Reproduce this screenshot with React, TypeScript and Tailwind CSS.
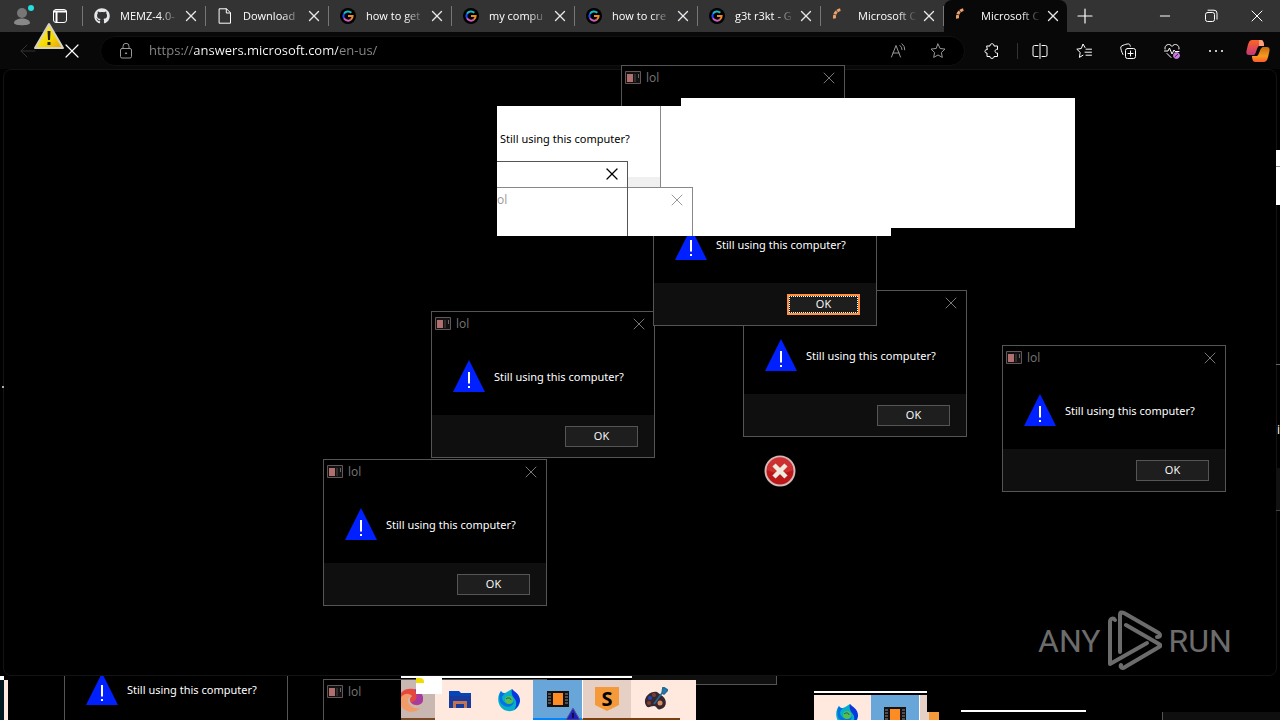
import clsx from "clsx";
import { Minus, Plus, X } from "lucide-react";
import { type ReactNode } from "react";
import { FaGithub } from "react-icons/fa";

type TabIcon = "github" | "file" | "google" | "loading";

const tabs: { icon: TabIcon; title: string }[] = [
  { icon: "github", title: "MEMZ-4.0-" },
  { icon: "file", title: "Download" },
  { icon: "google", title: "how to get" },
  { icon: "google", title: "my compu" },
  { icon: "google", title: "how to cre" },
  { icon: "google", title: "g3t r3kt - G" },
  { icon: "loading", title: "Microsoft C" },
  { icon: "loading", title: "Microsoft C" },
];

function Icon({ children, className }: { children: ReactNode; className?: string }) {
  return (
    <svg
      viewBox="0 0 16 16"
      fill="none"
      stroke="currentColor"
      strokeLinecap="round"
      strokeLinejoin="round"
      aria-hidden="true"
      className={clsx("size-4 shrink-0", className)}
    >
      {children}
    </svg>
  );
}

function Favicon({ icon }: { icon: TabIcon }) {
  if (icon === "github") {
    return <FaGithub className="size-4 shrink-0 text-gray-200" />;
  }
  if (icon === "file") {
    return (
      <Icon className="text-white">
        <path d="M2.500.8h7l4 4v10.400h-11zM9.300.8v4.200h4.200" />
      </Icon>
    );
  }
  if (icon === "google") {
    return (
      <svg viewBox="0 0 16 16" fill="none" strokeWidth="2" className="size-4 shrink-0" aria-hidden="true">
        <circle cx="8" cy="8" r="8" fill="#000" />
        <path d="M4 5.700A4.600 4.600 0 0 1 11.300 4.800" stroke="#14bccb" />
        <path d="M4 5.700A4.600 4.600 0 0 0 4 10.300" stroke="#2448f8" />
        <path d="M4 10.300A4.600 4.600 0 0 0 11 11.500" stroke="#d45fc0" />
        <path d="M11 11.500A4.600 4.600 0 0 0 12.600 8H8" stroke="#f08a20" />
      </svg>
    );
  }
  return (
    <Icon className="text-[#eda06a]">
      <path d="M2.500 10.500C2 5.500 4.500 2.300 9 1.500" strokeWidth="3" strokeDasharray="3.500 .6" strokeLinecap="butt" />
    </Icon>
  );
}

function Tab({ icon, title, active }: { icon: TabIcon; title: string; active: boolean }) {
  return (
    <div
      className={clsx(
        "flex w-[123px] shrink items-center pl-[11px] pr-[5px]",
        active ? "h-8 rounded-t-lg bg-[#080808]" : "h-5 border-r border-[#777]",
      )}
    >
      <Favicon icon={icon} />
      <button className="ml-2.5 min-w-0 flex-1 overflow-hidden whitespace-nowrap text-left text-[11px] text-white [mask-image:linear-gradient(90deg,#000_65%,transparent_98%)]">
        {title}
      </button>
      <button aria-label="Close tab" className="ml-0.5 text-gray-200">
        <X className="size-[18px]" strokeWidth={1.800} />
      </button>
    </div>
  );
}

function TabStrip() {
  return (
    <div className="flex h-8 items-center bg-[#333]">
      <div className="flex h-5 w-[83px] shrink-0 items-center border-r border-[#777] pl-3">
        <button aria-label="Profile">
          <svg viewBox="0 0 24 24" className="size-6" aria-hidden="true">
            <circle cx="10" cy="9" r="5" fill="#777" />
            <path d="M2 19c0-6 16-6 16 0 0 3-16 3-16 0z" fill="#888" />
            <circle cx="19" cy="4" r="3" fill="#20e0e0" />
          </svg>
        </button>
        <button aria-label="Tab actions" className="ml-4 text-white">
          <Icon>
            <rect x="1.500" y="1.500" width="13" height="13" rx="2.500" />
            <path d="M2 3.500h12M4.500 5v9" strokeWidth="2" />
          </Icon>
        </button>
      </div>
      <div className="flex min-w-0 items-center">
        {tabs.map((tab, i) => (
          <Tab key={i} {...tab} active={i === tabs.length - 1} />
        ))}
      </div>
      <button aria-label="New tab" className="ml-1.5 text-white">
        <Plus className="size-6" strokeWidth={1.200} />
      </button>
      <div className="ml-auto flex items-center text-white">
        <button aria-label="Minimize" className="flex w-[46px] justify-center">
          <Minus className="size-4" strokeWidth={1.500} />
        </button>
        <button aria-label="Restore" className="flex w-[46px] justify-center">
          <Icon className="size-3.5">
            <rect x="2.500" y="4.500" width="9" height="9" rx="2" />
            <path d="M5 2.200h6a3 3 0 0 1 3 3v6" />
          </Icon>
        </button>
        <button aria-label="Close" className="flex w-[46px] justify-center">
          <X className="size-5" strokeWidth={1.200} />
        </button>
      </div>
    </div>
  );
}

function ToolbarButton({ label, children }: { label: string; children: ReactNode }) {
  return (
    <button aria-label={label} className="flex w-11 justify-center text-white">
      {children}
    </button>
  );
}

function Toolbar() {
  return (
    <div className="flex h-[37px] items-center bg-[#080808] pr-0.5 pt-px">
      <div className="flex w-[100px] shrink-0 items-center pl-5">
        <button aria-label="Back" className="text-[#333]">
          <Icon>
            <path d="M15 8H1M7 2 1 8l6 6" />
          </Icon>
        </button>
        <button aria-label="Stop" className="ml-6 text-white">
          <X className="size-6" strokeWidth={1.200} />
        </button>
      </div>
      <div className="flex h-[30px] flex-1 items-center rounded-full border border-[#101010] bg-black pl-[17px] pr-[18px] text-[#999]">
        <Icon>
          <rect x="2.500" y="5.500" width="11" height="9.500" rx="1.500" />
          <path d="M5 5.500V3.300a3 3 0 0 1 6 0v2.200" />
          <circle cx="8" cy="10.300" r=".6" fill="currentColor" />
        </Icon>
        <input
          aria-label="Address"
          defaultValue="https://answers.microsoft.com/en-us/"
          className="ml-[15px] min-w-0 flex-1 bg-[linear-gradient(90deg,#8a8a8a_45px,#fff_45px,#fff_189px,#8a8a8a_189px)] bg-clip-text text-[13px] text-transparent outline-none"
        />
        <button aria-label="Read aloud" className="mr-6">
          <Icon>
            <path d="M1.500 14 6 2.500 10.500 14M3 10h6M10 2.500a5 5 0 0 1 2 4M12 .8a7 7 0 0 1 2.800 6" />
          </Icon>
        </button>
        <button aria-label="Add to favorites">
          <Icon>
            <path d="m8 1 2.100 4.500 4.900.6-3.600 3.400.9 4.900L8 12l-4.300 2.400.9-4.900L1 6.100l4.900-.6z" />
          </Icon>
        </button>
      </div>
      <div className="ml-[5px] flex items-center">
        <ToolbarButton label="Extensions">
          <Icon>
            <path d="M3 3h3c-.5-3 4.500-3 4 0h3.500v3.500c-3-1-3.500 4 0 3.500v3.500H10c.5 2.500-4.500 2.500-4 0H3V10C.2 10.500.2 6 3 6.500z" />
          </Icon>
        </ToolbarButton>
        <span className="ml-[3px] h-4 w-px bg-[#333]" />
        <ToolbarButton label="Split screen">
          <Icon>
            <path d="M6 2.500H2.500a1.500 1.500 0 0 0-1.500 1.500v8a1.500 1.500 0 0 0 1.500 1.500H6M10 2.500h3.500A1.500 1.500 0 0 1 15 4v8a1.500 1.500 0 0 1-1.500 1.500H10M8 .5v15" />
          </Icon>
        </ToolbarButton>
        <ToolbarButton label="Favorites">
          <Icon>
            <path d="M9 4.500 7 1 5.300 5.500.8 6.200l3.400 3.200-.8 5L7 12.200M10 6.200h5.500M9 9.200h6.500M10 12.200h5.500" />
          </Icon>
        </ToolbarButton>
        <ToolbarButton label="Collections">
          <Icon>
            <path d="M3 11.500C1.500 9 .5 5 .8 4 1 2.500 7.500.5 9 1c.8.200 1 1 1.300 2.200" />
            <rect x="5.500" y="5.500" width="10" height="10" rx="2" />
            <path d="M10.500 8v5M8 10.500h5" />
          </Icon>
        </ToolbarButton>
        <ToolbarButton label="Browser essentials">
          <Icon>
            <path d="M1 6C0 2 5.500-.5 8 3.500 10.500-.5 16 2 15 6M.5 8H4l1.500-3L8 11l2-4 1 1.500h4M3 10.500l4 4" />
            <circle cx="12.500" cy="12.500" r="3" fill="#c77ddb" stroke="#c77ddb" />
            <path d="m11 13.700 2.800-2.500" stroke="#402050" />
          </Icon>
        </ToolbarButton>
        <ToolbarButton label="Settings and more">
          <Icon>
            <path d="M2 8h.01M8 8h.01M14 8h.01" strokeWidth="2" />
          </Icon>
        </ToolbarButton>
        <button aria-label="Copilot" className="flex w-10 justify-center">
          <svg viewBox="0 0 24 24" className="size-6" aria-hidden="true">
            <defs>
              <linearGradient id="copilot-a" x2="0" y2="1">
                <stop stopColor="#ff6425" />
                <stop offset="1" stopColor="#c43578" />
              </linearGradient>
              <linearGradient id="copilot-b" x2="0" y2="1">
                <stop stopColor="#c86a10" />
                <stop offset=".6" stopColor="#f59a20" />
                <stop offset="1" stopColor="#ff5a28" />
              </linearGradient>
            </defs>
            <path d="M6 1h9c3 0 3 5 3 6h-5c-2 0-3 9-5 9H3c-3 0-3-3-2-6 1-5 2-9 5-9z" fill="url(#copilot-a)" />
            <path d="M18 23H9c-2 0-3-3-3-6h5c2 0 3-9 6-9h4c3 0 3 3 2 6-1 5-2 9-5 9z" fill="url(#copilot-b)" />
            <path d="M13 1h2c3 0 3 5 3 6h-5z" fill="#f9a17d" />
          </svg>
        </button>
      </div>
    </div>
  );
}

function WarningIcon() {
  return (
    <svg viewBox="0 0 32 32" className="size-8 shrink-0" aria-hidden="true">
      <path d="m16 0 16 32H0z" fill="#0020ff" />
      <path d="M15 12h2v11.500h-2zM15 26h2v2h-2z" fill="#fff" />
    </svg>
  );
}

type DialogProps = {
  className: string;
  focused?: boolean;
  light?: boolean;
};

function Dialog({ className, focused, light }: DialogProps) {
  return (
    <div
      role="dialog"
      aria-label="lol"
      className={clsx(
        "w-56 border text-[11px]",
        light ? "border-[#888] bg-white text-black" : "border-[#555] bg-black text-white",
        className,
      )}
    >
      <div className={clsx("flex h-6 items-center pl-[3px] pr-[5px]", light ? "text-[#999]" : "text-[#777]")}>
        <svg viewBox="0 0 16 14" className="h-3.5 w-4" aria-hidden="true">
          <path d="M.5.5h15v12H.5z" fill="#111" stroke="#665558" />
          <path d="M2 3h6v8H2z" fill="#b07070" />
          <path d="M9 3h2v8H9z" fill="#302c2c" />
          <path d="M13 3h1v4h-1z" fill="#666" />
        </svg>
        <span className="ml-[5px] text-xs">lol</span>
        <button aria-label="Close" className="ml-auto">
          <X className="size-5" strokeWidth={1.200} />
        </button>
      </div>
      <div className="flex h-[79px] items-center pl-[21px] pt-px">
        <WarningIcon />
        <p className="ml-[9px] whitespace-nowrap pt-0.5 font-['Noto_Sans','Open_Sans',sans-serif]">
          Still using this computer?
        </p>
      </div>
      <div className={clsx("flex h-[42px] items-center justify-end pr-4", light ? "bg-[#f0f0f0]" : "bg-[#0f0f0f]")}>
        <button
          className={clsx(
            "h-[21px] w-[73px] bg-[#1e1e1e] text-white",
            focused ? "border-2 border-[#ff9040] outline-1 -outline-offset-3 outline-dotted outline-white" : "border border-[#555]",
          )}
        >
          OK
        </button>
      </div>
    </div>
  );
}

function Smear() {
  return (
    <>
      <div className="absolute left-[681px] top-[98px] h-[130px] w-[394px] bg-white" />
      <div className="absolute left-[497px] top-[106px] h-[130px] w-[394px] overflow-hidden bg-white">
        <Dialog light className="absolute -left-[60px] -top-[33px]" />
        <div className="absolute left-0 top-[55px] flex h-[75px] w-[131px] items-start justify-end border-r border-t border-[#555] bg-white pr-[5px] pt-0.5 text-black">
          <X className="size-5" strokeWidth={1.500} />
        </div>
        <Dialog light className="absolute -left-7 top-[81px]" />
        <div className="absolute left-[130px] top-[81px] h-[49px] w-px bg-[#555]" />
      </div>
    </>
  );
}

function FirefoxIcon() {
  return (
    <svg viewBox="0 0 24 24" className="size-6" aria-hidden="true">
      <path d="M4 3c1 2 2 2 4 2 2-1 4-2 7-4l2 3c6 3 8 11 3 16-5 5-13 4-17-2C0 12 1 7 4 3z" fill="#07aec8" />
      <path d="M15 1c2 3 8 4 8 12-1 4-3 7-6 9 3-4 3-9 0-12-2-2-3-6-2-9z" fill="#0737df" />
      <path d="M4 3c1 2 2 2 4 2L5 9c0 7 10 9 12 4 0 7-10 8-14 1-1-4-1-8 1-11z" fill="#0572e3" />
      <circle cx="12" cy="12" r="4" fill="#55bf4a" />
      <path d="M9 11c2-2 5-1 5 1" stroke="#164da0" fill="none" />
    </svg>
  );
}

function FilmIcon() {
  return (
    <svg viewBox="0 0 22 16" className="h-4 w-[22px]" aria-hidden="true">
      <path d="M0 0h22v16H0z" fill="#15110e" />
      <path d="M6 2h10v12H6z" fill="#ff8b25" />
      <path d="M1 3h3m-3 3h3M1 9h3m-3 3h3M18 3h3m-3 3h3m-3 3h3m-3 3h3" stroke="#86929d" />
    </svg>
  );
}

function TaskButton({ label, className, children }: { label: string; className?: string; children?: ReactNode }) {
  return (
    <button aria-label={label} className={clsx("flex h-10 w-[49px] shrink-0 items-center justify-center", className)}>
      {children}
    </button>
  );
}

function Taskbar() {
  return (
    <div className="absolute left-[401px] top-[676px]">
      <div className="h-0.5 w-[231px] bg-white" />
      <div className="mt-0.5 flex w-[295px] bg-[#ffe9de]">
        <button aria-label="Edge" className="h-10 w-[34px] border-b-2 border-[#7a4a28] bg-[#c9b8b2]">
          <svg viewBox="0 0 34 38" className="h-[38px] w-[34px]" aria-hidden="true">
            <path d="M0 13C4 7 17 7 21 15c3 6-1 11-7 10-5-1-7-6-3-9C5 13 2 17 0 21z" fill="#e7483d" />
            <path d="M13 9c8 1 11 9 8 14-3 3-9 2-11-1 5 0 8-5 3-13z" fill="#a63ba0" />
            <path d="M0 17c5-5 9-3 11-1-6 1-6 9 3 12 4 1 5 0 6-1-4 7-16 6-20-1z" fill="#f29a68" />
          </svg>
        </button>
        <TaskButton label="Explorer">
          <svg viewBox="0 0 22 20" className="h-5 w-[22px]" aria-hidden="true">
            <path d="M0 1h10l2 2h10v15H0z" fill="#0645b5" />
            <path d="M0 6h22v12H0z" fill="#183a9c" />
            <path d="M4 18v-7h14v7h-3v-4H7v4z" fill="#c27352" />
          </svg>
        </TaskButton>
        <TaskButton label="Firefox">
          <FirefoxIcon />
        </TaskButton>
        <TaskButton label="Media" className="border-b-2 border-[#0085ff] bg-[#68a6da]">
          <FilmIcon />
        </TaskButton>
        <TaskButton label="Sublime" className="border-b-2 border-l border-b-[#7a4010] border-l-white bg-[#e6d0c6]">
          <span className="flex h-6 w-6 items-center justify-center bg-[#f49a3b] text-xl font-bold text-black [clip-path:polygon(0_0,100%_0,100%_75%,50%_100%,0_75%)]">
            S
          </span>
        </TaskButton>
        <TaskButton label="Paint" className="border-b-2 border-[#7a4010]">
          <svg viewBox="0 0 24 24" className="size-6" aria-hidden="true">
            <path d="M1 16C0 9 7 4 13 5l4 3c6 3 7 12 0 14-4 2-4-3-7-3-4 0-7 4-9-3z" fill="#36272e" />
            <path d="m10 17 8-11M18 6l1-6 5 3-4 4z" stroke="#236b99" strokeWidth="1.500" fill="#277aad" />
            <circle cx="6" cy="11" r="2" fill="#2444b5" />
            <circle cx="10" cy="8" r="2" fill="#7b3f31" />
            <circle cx="5" cy="16" r="2" fill="#8a3a25" />
            <circle cx="16" cy="16" r="2.500" fill="#dd8a5d" />
          </svg>
        </TaskButton>
      </div>
      <div className="absolute left-[15px] top-0 h-[18px] w-[26px] bg-white pt-0.5">
        <div className="h-[5px] w-2 rounded-tr bg-[#f0dc00]" />
      </div>
      <svg viewBox="0 0 16 12" className="absolute bottom-0 left-[164px] h-3 w-4" aria-hidden="true">
        <path d="m8 0 7 12H1z" fill="#2020c0" stroke="#555a90" />
        <path d="M8 5v5" stroke="#101040" strokeWidth="2" />
      </svg>
    </div>
  );
}

function TaskbarEcho() {
  return (
    <div className="absolute left-[814px] top-[691px] h-[29px] w-[125px] overflow-hidden">
      <div className="h-0.5 w-[113px] bg-white" />
      <div className="mt-0.5 flex w-[113px] overflow-hidden bg-[#ffe9de]">
        <TaskButton label="Firefox" className="ml-2">
          <FirefoxIcon />
        </TaskButton>
        <TaskButton label="Media" className="border-r border-white bg-[#68a6da]">
          <FilmIcon />
        </TaskButton>
        <div className="w-2 bg-[#e6d0c6]" />
      </div>
      <div className="absolute left-[106px] top-[21px] h-2 w-[19px] bg-linear-to-r from-[#e6d0c6] from-50% to-[#f49a3b] to-50%" />
    </div>
  );
}

function Watermark() {
  return (
    <div className="absolute left-[1038px] top-[610px] flex items-center font-[Roboto,'Liberation_Sans',sans-serif] text-[32px] text-[#6c6c6c]">
      <span>ANY</span>
      <svg viewBox="0 0 54 62" className="ml-2 mr-1.5 h-[62px] w-[54px]" fill="none" stroke="currentColor" strokeWidth="4" strokeLinejoin="round" strokeLinecap="round" aria-hidden="true">
        <path d="M12 42V5c0-3 2-3 4-2l33 19c4 2 4 5 0 5" />
        <path d="M7 10c-2-3-5-1-5 2v42l37-21" />
        <path d="m18 15 33 19c2 1 2 2 0 3L17 57c-3 2-5 0-4-2" />
      </svg>
      <span>RUN</span>
    </div>
  );
}

export default function App() {
  return (
    <div className="relative h-screen overflow-hidden bg-black font-['Open_Sans','Noto_Sans',sans-serif]">
      <div className="flex h-full flex-col pb-11">
        <TabStrip />
        <Toolbar />
        <main className="mx-[3px] flex-1 rounded-lg border border-[#131313] bg-black" />
      </div>

      {/* Stray system icons */}
      <svg viewBox="0 0 32 28" className="absolute left-[33px] top-[22px] h-7 w-8" aria-hidden="true">
        <defs>
          <linearGradient id="caution" x2="1" y2="1">
            <stop stopColor="#fff45a" />
            <stop offset=".6" stopColor="#f5d800" />
            <stop offset="1" stopColor="#e89b10" />
          </linearGradient>
        </defs>
        <path d="m16 2 14 24H2z" fill="url(#caution)" stroke="#d5d2c0" strokeWidth="2" strokeLinejoin="round" />
        <path d="M14.500 9h3l-.5 9h-2zM14.500 20h3v3h-3z" fill="#222" />
      </svg>
      <svg viewBox="0 0 32 32" className="absolute left-[764px] top-[455px] size-8" aria-hidden="true">
        <circle cx="16" cy="16" r="14.500" fill="#bb1919" stroke="#d5b8b8" strokeWidth="2" />
        <path d="M3 15a13 13 0 0 1 26 0c-7 4-19 4-26 0z" fill="#d84040" opacity=".6" />
        <path d="m10 10 12 12M22 10 10 22" stroke="#eeeade" strokeWidth="4.500" />
      </svg>

      {/* Message boxes */}
      <Dialog className="absolute left-[621px] top-[65px]" />
      <Dialog className="absolute left-[743px] top-[290px]" />
      <Dialog className="absolute left-[431px] top-[311px]" />
      <Dialog focused className="absolute left-[653px] top-[179px]" />
      <Dialog className="absolute left-[1002px] top-[345px]" />
      <Dialog className="absolute left-[323px] top-[459px]" />
      <Dialog className="absolute left-[323px] top-[679px]" />
      <div className="absolute left-16 top-[676px] h-11 w-56 overflow-hidden">
        <Dialog className="-mt-[52px]" />
      </div>
      <div className="absolute left-[632px] top-[676px] h-[9px] w-[145px] border-b border-r border-[#555] bg-[#0f0f0f]" />
      <Smear />

      {/* Screen edge leftovers */}
      <div className="absolute right-0 top-[150px] h-[55px] w-1 bg-white pt-4">
        <div className="h-px bg-[#999]" />
      </div>
      <div className="absolute right-0 top-[364px] h-px w-1 bg-[#666]" />
      <span className="absolute right-0 top-[422px] text-xs text-white">i</span>
      <div className="absolute right-0 top-[468px] h-[43px] w-1 border-b border-[#444] bg-[#111]" />
      <div className="absolute left-0.5 top-[386px] size-0.5 bg-[#aaa]" />
      <div className="absolute left-0 top-[676px] h-1 w-1 bg-white" />
      <div className="absolute left-0 top-[680px] h-10 w-2 border-r-4 border-[#ffe9de] bg-[#001820]" />
      <div className="absolute left-[961px] top-[710px] h-0.5 w-[125px] bg-white" />
      <div className="absolute left-[1162px] right-0 top-[712px] h-2 border-l border-[#555] bg-[#0f0f0f]" />

      <Taskbar />
      <TaskbarEcho />
      <Watermark />
    </div>
  );
}
